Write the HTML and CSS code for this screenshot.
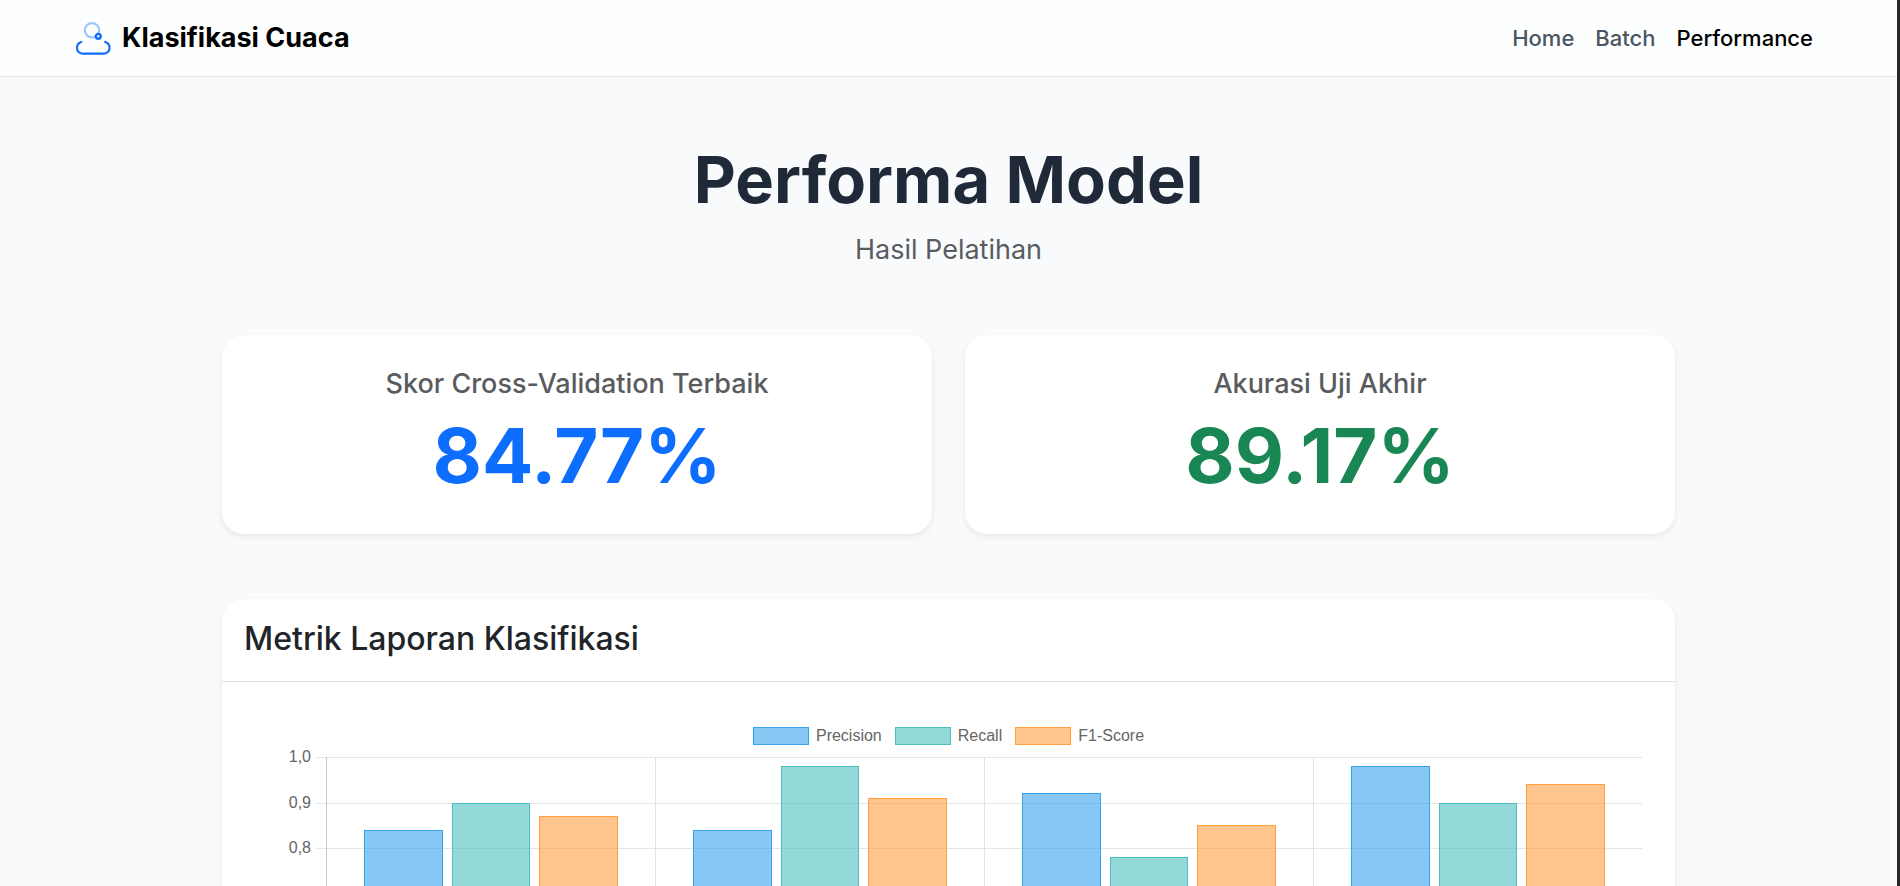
FILE: index.html
```html
<!DOCTYPE html>
<html lang="id">
<head>
<meta charset="utf-8">
<meta name="viewport" content="width=device-width, initial-scale=1">
<title>Performa Model</title>
<link rel="stylesheet" href="styles.css">
</head>
<body>
<div class="page">
  <header class="navbar">
    <a class="brand" href="#">
      <svg class="brand-icon" viewBox="0 0 36 36" fill="none" stroke="#0d6efd" stroke-width="2.2" stroke-linecap="round" aria-hidden="true">
        <circle cx="17" cy="10.3" r="7.2" stroke="#9ec5fe"/>
        <circle cx="23.3" cy="16.3" r="2.4" fill="#fff" stroke-width="2.4"/>
        <path d="M6.3 22C3.6 22.9 2 25 2 27.7C2 31.2 4.6 33.6 8 33.6H28.5C32 33.6 34.5 31.2 34.5 27.7C34.5 25 32.9 22.9 30.2 22"/>
      </svg>
      <span>Klasifikasi Cuaca</span>
    </a>
    <nav class="nav-links">
      <a href="#">Home</a>
      <a href="#">Batch</a>
      <a class="active" href="#" aria-current="page">Performance</a>
    </nav>
  </header>

  <main class="container">
    <div class="intro">
      <h1>Performa Model</h1>
      <p>Hasil Pelatihan</p>
    </div>

    <section class="scores">
      <article class="card score">
        <h2>Skor Cross-Validation Terbaik</h2>
        <p class="value primary">84.77%</p>
      </article>
      <article class="card score">
        <h2>Akurasi Uji Akhir</h2>
        <p class="value success">89.17%</p>
      </article>
    </section>

    <section class="card report">
      <h2 class="report-title">Metrik Laporan Klasifikasi</h2>
      <div class="chart">
        <ul class="legend">
          <li><span class="swatch precision"></span>Precision</li>
          <li><span class="swatch recall"></span>Recall</li>
          <li><span class="swatch f1"></span>F1-Score</li>
        </ul>
        <div class="chart-area">
          <div class="axis">
            <span>1,0</span><span>0,9</span><span>0,8</span>
          </div>
          <div class="ticks"></div>
          <div class="plot">
            <div class="group">
              <div class="bar precision" style="height:84%"></div>
              <div class="bar recall" style="height:90%"></div>
              <div class="bar f1" style="height:87%"></div>
            </div>
            <div class="group">
              <div class="bar precision" style="height:84%"></div>
              <div class="bar recall" style="height:98%"></div>
              <div class="bar f1" style="height:91%"></div>
            </div>
            <div class="group">
              <div class="bar precision" style="height:92%"></div>
              <div class="bar recall" style="height:78%"></div>
              <div class="bar f1" style="height:85%"></div>
            </div>
            <div class="group">
              <div class="bar precision" style="height:98%"></div>
              <div class="bar recall" style="height:90%"></div>
              <div class="bar f1" style="height:94%"></div>
            </div>
          </div>
        </div>
      </div>
    </section>
  </main>
</div>
</body>
</html>
```

FILE: styles.css
```css
* {
  box-sizing: border-box;
}

body {
  margin: 0;
  height: 100vh;
  overflow: hidden;
  border-right: 3px solid #272727;
  background: #f9fafc;
  color: #212529;
  font-family: Inter, "Liberation Sans", sans-serif;
  font-size: 22px;
}

h1, h2, p, ul {
  margin: 0;
  padding: 0;
}

a {
  color: inherit;
  text-decoration: none;
}

.page {
  height: 100%;
  overflow-y: auto;
  scrollbar-width: none;
}

.navbar {
  display: flex;
  align-items: center;
  justify-content: space-between;
  height: 77px;
  padding: 0 84px 0 75px;
  background: #fdfefe;
  border-bottom: 1px solid #e5e7eb;
}

.brand {
  display: flex;
  align-items: center;
  gap: 11px;
  color: #000;
  font-size: 27px;
  font-weight: 700;
  line-height: 36px;
}

.brand-icon {
  width: 36px;
  height: 36px;
}

.nav-links {
  display: flex;
  gap: 21px;
  color: #4b5563;
  font-weight: 500;
}

.nav-links .active {
  color: #000;
}

.container {
  max-width: 1453px;
  margin: 0 auto;
  padding: 63px 0 66px;
}

.intro {
  display: flex;
  flex-direction: column;
  gap: 11px;
  margin-bottom: 65px;
  text-align: center;
}

.intro h1 {
  color: #1f2937;
  font-size: 65px;
  font-weight: 700;
  line-height: 79px;
}

.intro p {
  color: #595c5f;
  font-size: 27px;
  line-height: 40px;
}

.card {
  background: #fff;
  border-radius: 22px;
  box-shadow: 0 3px 6px rgba(0, 0, 0, 0.075);
}

.scores {
  display: grid;
  grid-template-columns: 1fr 1fr;
  gap: 33px;
  margin-bottom: 65px;
}

.score {
  display: flex;
  flex-direction: column;
  gap: 9px;
  padding: 32px 32px 33px;
  text-align: center;
}

.score h2 {
  color: #595c5f;
  font-size: 27px;
  font-weight: 500;
  line-height: 33px;
}

.value {
  font-size: 76px;
  font-weight: 700;
  line-height: 92px;
}

.primary {
  color: #0d6efd;
}

.success {
  color: #198754;
}

.report-title {
  padding: 20px 22px 22px;
  border-bottom: 1px solid #e0e2e4;
  font-size: 32px;
  font-weight: 500;
  line-height: 40px;
}

.chart {
  padding: 45px 33px 66px;
  color: #666;
  font-family: "Liberation Sans", Arial, sans-serif;
  font-size: 16px;
  line-height: 18px;
}

.legend {
  display: flex;
  justify-content: center;
  gap: 13px;
  margin-bottom: 12px;
  list-style: none;
}

.legend li {
  display: flex;
  align-items: center;
  gap: 7px;
}

.swatch {
  width: 56px;
  height: 18px;
}

.precision {
  background: rgba(54, 162, 235, 0.6);
  border: 1px solid #36a2eb;
}

.recall {
  background: rgba(75, 192, 192, 0.6);
  border: 1px solid #4bc0c0;
}

.f1 {
  background: rgba(255, 159, 64, 0.6);
  border: 1px solid #ff9f40;
}

.chart-area {
  display: flex;
  height: 456px;
}

.axis {
  display: grid;
  grid-template-rows: repeat(10, 1fr);
  width: 61px;
  margin-top: -9px;
  margin-bottom: 9px;
  padding-right: 5px;
  text-align: right;
}

.ticks,
.plot {
  background-image: repeating-linear-gradient(#e5e5e5 0 1px, transparent 1px 10%);
}

.ticks {
  width: 10px;
}

.plot {
  flex: 1;
  display: grid;
  grid-template-columns: repeat(4, 1fr);
}

.group {
  display: flex;
  align-items: flex-end;
  justify-content: center;
  gap: 9px;
  border-left: 1px solid #e2e2e2;
}

.group:first-child {
  border-left-color: #c8c8c8;
}

.bar {
  width: 24%;
}
```
